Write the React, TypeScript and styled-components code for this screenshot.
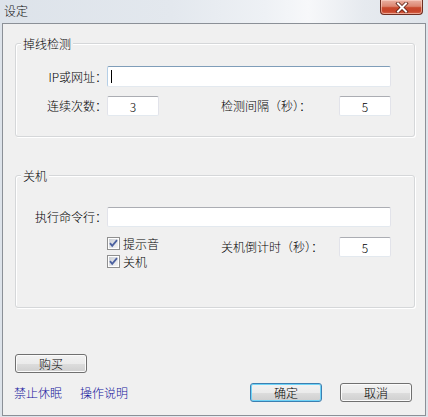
import React from 'react';
import styled, { createGlobalStyle } from 'styled-components';

const GlobalStyle = createGlobalStyle`
  html, body {
    margin: 0;
    padding: 0;
    background: #dfe5ec;
  }
  body {
    font-family: "Noto Sans CJK SC", "Liberation Sans", sans-serif;
    font-size: 12px;
    font-weight: 300;
    color: #000;
  }
`;

const Window = styled.div`
  width: 428px;
  height: 417px;
  display: flex;
  flex-direction: column;
  background: linear-gradient(90deg, #dde3ea 0%, #e3e8ee 40%, #eef1f5 62%, #f7f8fa 72%, #e6eaef 85%, #dfe4ea 100%);
  box-sizing: border-box;
`;

const TitleBar = styled.div`
  height: 23px;
  display: flex;
  justify-content: space-between;
  align-items: flex-start;
  flex-shrink: 0;
`;

const Title = styled.span`
  padding: 3px 0 0 4px;
  font-size: 12px;
  line-height: 15px;
  color: #111;
`;

const CloseButton = styled.div`
  width: 43px;
  height: 15px;
  margin-right: 5px;
  box-sizing: border-box;
  border: 1px solid #6e2e22;
  border-top: none;
  border-radius: 0 0 4px 4px;
  background: linear-gradient(#eab0a2 0%, #dc8671 45%, #c8492d 55%, #c7442a 80%, #d86a4e 100%);
  box-shadow: inset 0 0 0 1px rgba(255, 220, 210, 0.55);
  display: flex;
  align-items: center;
  justify-content: center;
`;

const Client = styled.div`
  flex: 1;
  margin: 0 2px 1px 2px;
  border: 1px solid #8b9097;
  background: #f0f0f0;
  padding: 19px 11px 0 12px;
  display: flex;
  flex-direction: column;
`;

const Group = styled.div<{ $height: number; $top: number; $gap: number }>`
  position: relative;
  width: 400px;
  height: ${p => p.$height}px;
  box-sizing: border-box;
  border: 1px solid #d5d7d9;
  border-radius: 3px;
  box-shadow: inset 1px 1px 0 #fff, 1px 1px 0 #fff;
  padding-top: ${p => p.$top}px;
  display: grid;
  grid-template-columns: 91px 114px 118px 52px;
  grid-auto-rows: min-content;
  row-gap: ${p => p.$gap}px;
  align-content: start;
  & + & {
    margin-top: 38px;
  }
`;

const Legend = styled.span`
  position: absolute;
  top: -8px;
  left: 5px;
  padding: 0 2px;
  background: #f0f0f0;
  line-height: 15px;
`;

const Label = styled.span<{ $align?: 'right' | 'left'; $top?: boolean }>`
  align-self: ${p => (p.$top ? 'start' : 'center')};
  margin-top: ${p => (p.$top ? 3 : 0)}px;
  text-align: ${p => p.$align ?? 'right'};
  white-space: nowrap;
  line-height: 14px;
`;

const TextBox = styled.div<{ $wide?: boolean; $focused?: boolean; $h?: number }>`
  grid-column: ${p => (p.$wide ? '2 / 5' : 'auto')};
  width: ${p => (p.$wide ? '284px' : '52px')};
  height: ${p => p.$h ?? 20}px;
  box-sizing: border-box;
  background: #fff;
  border: 1px solid #e2e3ea;
  border-top-color: ${p => (p.$focused ? '#7f9db9' : '#abadb3')};
  border-left-color: ${p => (p.$focused ? '#b5cfe7' : '#e2e3ea')};
  border-bottom-color: #e3e9ef;
  border-radius: 2px;
  display: flex;
  align-items: center;
  justify-content: ${p => (p.$wide ? 'flex-start' : 'center')};
  padding-left: ${p => (p.$wide ? 3 : 0)}px;
  font-size: 12px;
`;

const Caret = styled.span`
  display: inline-block;
  width: 1px;
  height: 13px;
  background: #000;
`;

const Checks = styled.div`
  display: flex;
  flex-direction: column;
  gap: 5px;
`;

const CheckRow = styled.label`
  display: flex;
  align-items: center;
  gap: 3px;
  height: 13px;
  line-height: 13px;
`;

const Spacer = styled.div`
  flex: 1;
`;

const WinButton = styled.button<{ $default?: boolean }>`
  width: 72px;
  height: 19px;
  padding: 0;
  font-family: inherit;
  font-size: 12px;
  font-weight: 300;
  line-height: 16px;
  color: #000;
  border: 1px solid ${p => (p.$default ? '#3c7fb1' : '#707070')};
  border-radius: 3px;
  background: linear-gradient(#f2f2f2 0%, #ebebeb 50%, #dddddd 51%, #cfcfcf 100%);
  box-shadow: inset 0 0 0 1px ${p => (p.$default ? '#6fd3f7' : '#fbfbfb')};
`;

const BuyRow = styled.div`
  margin-bottom: 10px;
`;

const Footer = styled.div`
  display: flex;
  align-items: center;
  margin-bottom: 13px;
  margin-left: -1px;
  margin-right: 2px;
`;

const Links = styled.div`
  display: flex;
  gap: 18px;
  flex: 1;
`;

const Link = styled.a`
  color: #12129c;
  text-decoration: none;
  line-height: 14px;
  cursor: pointer;
`;

const Buttons = styled.div`
  display: flex;
  gap: 18px;
`;

const CheckBox = () => (
  <svg width="13" height="13" viewBox="0 0 13 13">
    <defs>
      <linearGradient id="cbg" x1="0" y1="0" x2="1" y2="1">
        <stop offset="0" stopColor="#cbcfd5" />
        <stop offset="1" stopColor="#f6f6f6" />
      </linearGradient>
    </defs>
    <rect x="0.5" y="0.5" width="12" height="12" fill="#fff" stroke="#8f8f8f" />
    <rect x="2" y="2" width="9" height="9" fill="url(#cbg)" />
    <path d="M3 6.2 L5.2 8.8 L10 3.2" fill="none" stroke="#4c61a0" strokeWidth="1.8" />
  </svg>
);

const CloseGlyph = () => (
  <svg width="14" height="11" viewBox="0 0 14 11">
    <path d="M3 1.5 L11 9.5 M11 1.5 L3 9.5" stroke="#5a1d12" strokeWidth="3.6" strokeLinecap="square" />
    <path d="M3 1.5 L11 9.5 M11 1.5 L3 9.5" stroke="#fff" strokeWidth="2" strokeLinecap="square" />
  </svg>
);

export default function App() {
  return (
    <>
      <GlobalStyle />
      <Window>
        <TitleBar>
          <Title>设定</Title>
          <CloseButton>
            <CloseGlyph />
          </CloseButton>
        </TitleBar>
        <Client>
          <Group $height={94} $top={22} $gap={9}>
            <Legend>掉线检测</Legend>
            <Label>IP或网址：</Label>
            <TextBox $wide $focused $h={21}>
              <Caret />
            </TextBox>
            <Label>连续次数：</Label>
            <TextBox>3</TextBox>
            <Label $align="left">检测间隔（秒）：</Label>
            <TextBox>5</TextBox>
          </Group>

          <Group $height={133} $top={31} $gap={10}>
            <Legend>关机</Legend>
            <Label>执行命令行：</Label>
            <TextBox $wide />
            <span />
            <Checks>
              <CheckRow>
                <CheckBox />
                提示音
              </CheckRow>
              <CheckRow>
                <CheckBox />
                关机
              </CheckRow>
            </Checks>
            <Label $align="left" $top>
              关机倒计时（秒）：
            </Label>
            <TextBox>5</TextBox>
          </Group>

          <Spacer />
          <BuyRow>
            <WinButton>购买</WinButton>
          </BuyRow>
          <Footer>
            <Links>
              <Link>禁止休眠</Link>
              <Link>操作说明</Link>
            </Links>
            <Buttons>
              <WinButton $default>确定</WinButton>
              <WinButton>取消</WinButton>
            </Buttons>
          </Footer>
        </Client>
      </Window>
    </>
  );
}
